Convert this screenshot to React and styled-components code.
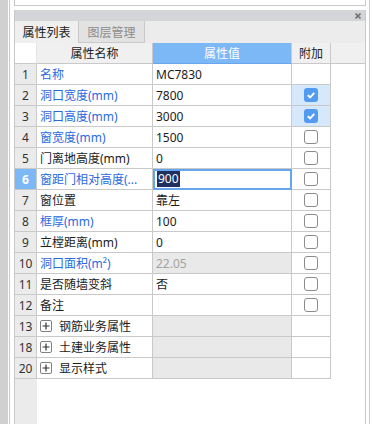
import React from "react";
import styled, { createGlobalStyle, css } from "styled-components";

const GlobalStyle = createGlobalStyle`
  html, body { margin: 0; padding: 0; background: #fff; }
  body {
    font-family: "Noto Sans", "Noto Sans CJK SC", sans-serif;
    font-size: 12px;
    color: #1c1c1c;
  }
`;

const LINE = "#c9c9c9";
const ACCENT = "#7cb8f6";
const COLS = "22px 116px 139px 39px 1fr";

const rows = [
  { no: 1, name: "名称", link: true, value: "MC7830", check: null },
  { no: 2, name: "洞口宽度(mm)", link: true, value: "7800", check: true },
  { no: 3, name: "洞口高度(mm)", link: true, value: "3000", check: true },
  { no: 4, name: "窗宽度(mm)", link: true, value: "1500", check: false },
  { no: 5, name: "门离地高度(mm)", value: "0", check: false },
  { no: 6, name: "窗距门相对高度(...", link: true, value: "900", check: false, editing: true },
  { no: 7, name: "窗位置", value: "靠左", check: false },
  { no: 8, name: "框厚(mm)", link: true, value: "100", check: false },
  { no: 9, name: "立樘距离(mm)", value: "0", check: false },
  { no: 10, name: "洞口面积(m²)", link: true, value: "22.05", check: false, disabled: true },
  { no: 11, name: "是否随墙变斜", value: "否", check: false },
  { no: 12, name: "备注", value: "", check: false },
  { no: 13, name: "钢筋业务属性", group: true },
  { no: 18, name: "土建业务属性", group: true },
  { no: 20, name: "显示样式", group: true },
];

const Page = styled.div`
  display: flex;
  width: 372px;
  height: 424px;
  overflow: hidden;
`;

const SideRail = styled.div`
  flex: none;
  width: 8px;
  background: #d0d0d0;
  border-right: 1px solid #fff;
  box-shadow: 1px 0 0 ${LINE};
`;

const Main = styled.div`
  flex: none;
  width: 352px;
  margin-left: 5px;
  display: flex;
  flex-direction: column;
`;

const EdgeLine = styled.div`
  flex: none;
  width: 1px;
  margin-left: 3px;
  background: ${LINE};
`;

const TopBox = styled.div`
  height: 5px;
  border: 1px solid ${LINE};
  border-top: none;
  margin-bottom: 4px;
`;

const Panel = styled.div`
  flex: 1;
  display: flex;
  flex-direction: column;
  border-left: 1px solid ${LINE};
  border-right: 1px solid ${LINE};
`;

const TitleBar = styled.div`
  height: 11px;
  background: #d4d5d9;
  display: flex;
  align-items: center;
  justify-content: flex-end;
  padding-right: 4px;
`;

const TabStrip = styled.div`
  height: 22px;
  display: flex;
  background: #ececec;
`;

const Tab = styled.div`
  width: ${(p) => p.$w}px;
  box-sizing: border-box;
  display: flex;
  align-items: center;
  justify-content: center;
  border-right: 1px solid ${LINE};
  background: ${(p) => (p.$active ? "#efefef" : "#e2e2e2")};
  color: ${(p) => (p.$active ? "#202020" : "#8c8c8c")};
  ${(p) => !p.$active && css`border-bottom: 1px solid ${LINE};`}
`;

const HeadRow = styled.div`
  display: grid;
  grid-template-columns: ${COLS};
  height: 21px;
`;

const HeadCell = styled.div`
  box-sizing: border-box;
  display: flex;
  align-items: center;
  justify-content: center;
  border-bottom: 1px solid ${LINE};
  border-right: 1px solid ${LINE};
  background: #f0f0f0;
  color: #222;
  ${(p) => p.$blank && css`background: #fff; border-right-color: #e4e4e4;`}
  ${(p) => p.$accent && css`background: ${ACCENT}; color: #fff; border-bottom-color: #68a7ee;`}
  ${(p) => p.$fill && css`border-right: none;`}
`;

const Body = styled.div`
  flex: 1;
  display: flex;
  flex-direction: column;
`;

const Row = styled.div`
  display: grid;
  grid-template-columns: ${COLS};
  height: 21px;
`;

const Cell = styled.div`
  box-sizing: border-box;
  display: flex;
  align-items: center;
  min-width: 0;
  border-right: 1px solid ${LINE};
  border-bottom: 1px solid ${LINE};
  white-space: nowrap;
  overflow: hidden;
`;

const IndexCell = styled(Cell)`
  justify-content: center;
  background: ${(p) => (p.$selected ? ACCENT : "#ebebeb")};
  color: ${(p) => (p.$selected ? "#fff" : "#333")};
  font-weight: ${(p) => (p.$selected ? 700 : 400)};
`;

const NameCell = styled(Cell)`
  padding-left: 3px;
  color: ${(p) => (p.$link ? "#2a6ae0" : "#1c1c1c")};
`;

const ValueCell = styled(Cell)`
  padding-left: 3px;
  background: ${(p) => (p.$shaded ? "#e9e9e9" : "#fff")};
  color: ${(p) => (p.$disabled ? "#a2a2a2" : "#1c1c1c")};
  ${(p) => p.$editing && css`outline: 2px solid #66a6ee; outline-offset: -2px;`}
`;

const AttachCell = styled(Cell)`
  justify-content: center;
  background: ${(p) => (p.$on ? "#d6e9fc" : "#fff")};
`;

const Filler = styled.div``;

const Selected = styled.span`
  margin-left: 1px;
  padding: 0 1px;
  line-height: 16px;
  background: #1e2f62;
  color: #fff;
`;

const Box = styled.span`
  width: 14px;
  height: 14px;
  box-sizing: border-box;
  border-radius: 3px;
  display: flex;
  align-items: center;
  justify-content: center;
  ${(p) =>
    p.$checked
      ? css`background: #529bf0;`
      : css`border: 1px solid #8c8c8c; background: #fff;`}
`;

const Expander = styled.span`
  width: 12px;
  height: 12px;
  box-sizing: border-box;
  border: 1px solid #808080;
  border-radius: 2px;
  display: flex;
  align-items: center;
  justify-content: center;
  margin-right: 7px;
  background: #fff;
`;

const Tail = styled.div`
  flex: 1;
  display: flex;
`;

const Gutter = styled.div`
  width: 22px;
  background: #ebebeb;
`;

const CloseIcon = () => (
  <svg width="6" height="6" viewBox="0 0 6 6">
    <path d="M0.5 0.5 L5.5 5.5 M5.5 0.5 L0.5 5.5" stroke="#747474" strokeWidth="1.6" />
  </svg>
);

const Checkbox = ({ checked }) => (
  <Box $checked={checked}>
    {checked && (
      <svg width="10" height="10" viewBox="0 0 10 10">
        <path d="M1.8 5.2 L4.1 7.3 L8.3 2.8" fill="none" stroke="#fff" strokeWidth="1.9" />
      </svg>
    )}
  </Box>
);

const Plus = () => (
  <Expander>
    <svg width="8" height="8" viewBox="0 0 8 8">
      <path d="M4 0.5 V7.5 M0.5 4 H7.5" stroke="#333" strokeWidth="1.2" />
    </svg>
  </Expander>
);

export default function App() {
  return (
    <Page>
      <GlobalStyle />
      <SideRail />
      <Main>
        <TopBox />
        <Panel>
          <TitleBar>
            <CloseIcon />
          </TitleBar>
          <TabStrip>
            <Tab $w={64} $active>属性列表</Tab>
            <Tab $w={66}>图层管理</Tab>
          </TabStrip>
          <HeadRow>
            <HeadCell $blank />
            <HeadCell>属性名称</HeadCell>
            <HeadCell $accent>属性值</HeadCell>
            <HeadCell>附加</HeadCell>
            <HeadCell $fill />
          </HeadRow>
          <Body>
            {rows.map((r) => (
              <Row key={r.no}>
                <IndexCell $selected={r.editing}>{r.no}</IndexCell>
                <NameCell $link={r.link}>
                  {r.group && <Plus />}
                  {r.name}
                </NameCell>
                <ValueCell
                  $shaded={r.group || r.disabled}
                  $disabled={r.disabled}
                  $editing={r.editing}
                >
                  {r.editing ? <Selected>{r.value}</Selected> : r.value}
                </ValueCell>
                <AttachCell $on={r.check === true}>
                  {r.check !== null && r.check !== undefined && (
                    <Checkbox checked={r.check} />
                  )}
                </AttachCell>
                <Filler />
              </Row>
            ))}
            <Tail>
              <Gutter />
            </Tail>
          </Body>
        </Panel>
      </Main>
      <EdgeLine />
    </Page>
  );
}
